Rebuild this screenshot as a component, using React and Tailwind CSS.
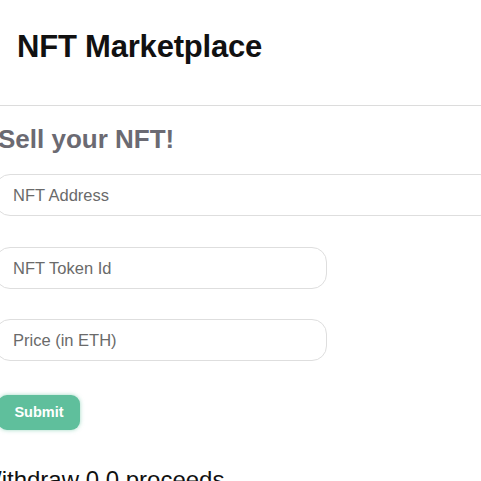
export default function App() {
  return (
    <div className="min-h-screen bg-white font-['Liberation_Sans',Arial,sans-serif] overflow-hidden">
      <header className="h-[106px] flex items-center px-[17px] pb-[10px] border-b border-[#dcdcdc]">
        <h1 className="text-[31px] font-bold text-[#111] tracking-[-0.2px]">NFT Marketplace</h1>
      </header>

      <main className="pt-[17px]">
        <h2 className="-ml-[2px] text-[26px] leading-[32px] font-bold text-[#6b6a72]">Sell your NFT!</h2>

        <form className="mt-[19px] flex flex-col" onSubmit={(e) => e.preventDefault()}>
          <input
            placeholder="NFT Address"
            className="-ml-[5px] w-[500px] h-[42px] rounded-[15px] border border-[#dedede] pl-[17px] text-[16.5px] text-[#333] placeholder:text-[#6a6a6a] outline-none"
          />
          <input
            placeholder="NFT Token Id"
            className="-ml-[5px] mt-[31px] w-[332px] h-[42px] rounded-[15px] border border-[#dedede] pl-[17px] text-[16.5px] text-[#333] placeholder:text-[#6a6a6a] outline-none"
          />
          <input
            placeholder="Price (in ETH)"
            className="-ml-[5px] mt-[30px] w-[332px] h-[42px] rounded-[15px] border border-[#dedede] pl-[17px] text-[16.5px] text-[#333] placeholder:text-[#6a6a6a] outline-none"
          />
          <button
            type="submit"
            className="-ml-[2px] mt-[34px] w-[82px] h-[35px] rounded-[9px] bg-[#5fbf9c] text-white text-[14.5px] font-bold shadow-[0_0_4px_rgba(95,191,156,0.6)]"
          >
            Submit
          </button>
        </form>

        <p className="-ml-[21px] mt-[34px] text-[24px] leading-[32px] text-[#111]">Withdraw 0.0 proceeds</p>
      </main>
    </div>
  );
}
